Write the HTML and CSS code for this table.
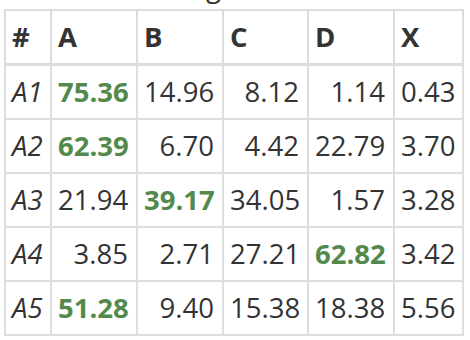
FILE: index.html
```html
<!DOCTYPE html>
<html>
<head>
<meta charset="utf-8">
<link rel="stylesheet" href="styles.css">
</head>
<body>
<div class="page">
<table class="grid">
<caption class="cap">Weighted</caption>
<colgroup>
<col class="c-idx"><col class="c-num"><col class="c-num"><col class="c-num2"><col class="c-num"><col class="c-x">
</colgroup>
<thead>
<tr><th>#</th><th>A</th><th>B</th><th>C</th><th>D</th><th>X</th></tr>
</thead>
<tbody>
<tr><td class="idx">A1</td><td class="max">75.36</td><td>14.96</td><td>8.12</td><td>1.14</td><td>0.43</td></tr>
<tr><td class="idx">A2</td><td class="max">62.39</td><td>6.70</td><td>4.42</td><td>22.79</td><td>3.70</td></tr>
<tr><td class="idx">A3</td><td>21.94</td><td class="max">39.17</td><td>34.05</td><td>1.57</td><td>3.28</td></tr>
<tr><td class="idx">A4</td><td>3.85</td><td>2.71</td><td>27.21</td><td class="max">62.82</td><td>3.42</td></tr>
<tr><td class="idx">A5</td><td class="max">51.28</td><td>9.40</td><td>15.38</td><td>18.38</td><td>5.56</td></tr>
</tbody>
</table>
</div>
</body>
</html>
```
FILE: styles.css
```css
html, body {
  margin: 0;
  padding: 0;
  background: #fff;
  overflow: hidden;
}
.page {
  margin-top: -31px;
  padding-left: 4px;
  font-family: "Open Sans", "DejaVu Sans", sans-serif;
  color: #333;
}
.grid {
  border-collapse: collapse;
  table-layout: fixed;
  width: 458px;
  font-size: 27.5px;
}
.cap {
  font-size: 27.5px;
  line-height: 36px;
  padding: 0 30px 4px 0;
  text-align: center;
  color: #333;
}
.c-idx { width: 46px; }
.c-num { width: 86px; }
.c-num2 { width: 85px; }
.c-x { width: 69px; }
.grid th, .grid td {
  border: 2px solid #dddddd;
  height: 52px;
  padding: 0 8px 0 6px;
  line-height: 36px;
  white-space: nowrap;
}
.grid th {
  text-align: left;
  font-weight: 700;
  border-bottom-width: 3px;
}
.grid td {
  text-align: right;
}
.grid td.idx {
  text-align: left;
  font-style: italic;
}
.grid td.max {
  color: #538a4b;
  font-weight: 700;
}
```
